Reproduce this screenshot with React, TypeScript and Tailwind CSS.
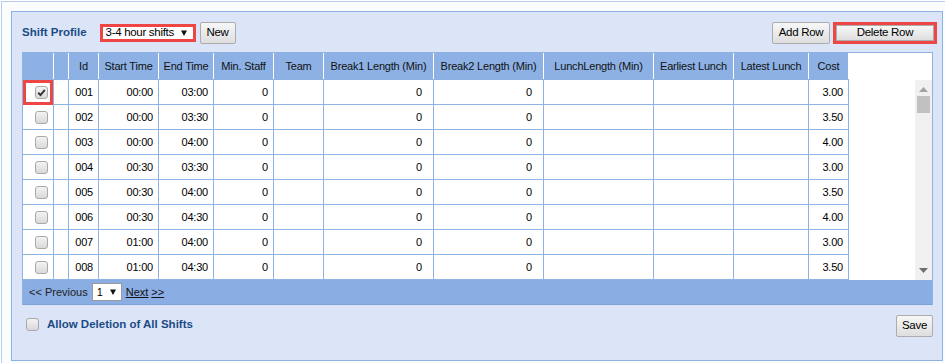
import React from 'react';

type Row = {
  id: string;
  start: string;
  end: string;
  cost: string;
};

const rows: Row[] = [
  { id: '001', start: '00:00', end: '03:00', cost: '3.00' },
  { id: '002', start: '00:00', end: '03:30', cost: '3.50' },
  { id: '003', start: '00:00', end: '04:00', cost: '4.00' },
  { id: '004', start: '00:30', end: '03:30', cost: '3.00' },
  { id: '005', start: '00:30', end: '04:00', cost: '3.50' },
  { id: '006', start: '00:30', end: '04:30', cost: '4.00' },
  { id: '007', start: '01:00', end: '04:00', cost: '3.00' },
  { id: '008', start: '01:00', end: '04:30', cost: '3.50' },
];

// column widths include the 1px right rule
const headers: { label: string; w: string }[] = [
  { label: '', w: 'w-[31px]' },
  { label: '', w: 'w-[15px]' },
  { label: 'Id', w: 'w-[30px]' },
  { label: 'Start Time', w: 'w-[60px]' },
  { label: 'End Time', w: 'w-[55px]' },
  { label: 'Min. Staff', w: 'w-[60px]' },
  { label: 'Team', w: 'w-[50px]' },
  { label: 'Break1 Length (Min)', w: 'w-[110px]' },
  { label: 'Break2 Length (Min)', w: 'w-[110px]' },
  { label: 'LunchLength (Min)', w: 'w-[110px]' },
  { label: 'Earliest Lunch', w: 'w-[80px]' },
  { label: 'Latest Lunch', w: 'w-[75px]' },
  { label: 'Cost', w: 'w-[40px]' },
];

function Check({ checked = false }: { checked?: boolean }) {
  return (
    <span className="flex h-[13px] w-[13px] items-center justify-center rounded-[3px] border border-[#a9a9a9] bg-linear-to-b from-[#f3f3f3] to-[#d9d9d9]">
      {checked && (
        <svg width="9" height="9" viewBox="0 0 9 9">
          <path d="M1.2 4.8 L3.5 7 L7.8 1.8" fill="none" stroke="#333" strokeWidth="1.9" />
        </svg>
      )}
    </span>
  );
}

function Arrow() {
  return (
    <svg width="6" height="6" viewBox="0 0 6 6">
      <path d="M0 0.5 H6 L3 6 Z" fill="#111" />
    </svg>
  );
}

function Btn({ children, className = '' }: { children: React.ReactNode; className?: string }) {
  return (
    <button
      className={`flex items-center justify-center rounded-[2px] border border-[#acacac] bg-linear-to-b from-[#f7f7f7] to-[#dedede] text-[11.5px] tracking-[-0.3px] text-black ${className}`}
    >
      {children}
    </button>
  );
}

const cell = 'flex h-[25px] shrink-0 items-center justify-end border-r border-b border-[#8db3e2] bg-white pr-[5px] text-[11px] tracking-[-0.2px] text-black';

export default function App() {
  return (
    <div className="h-[363px] w-[945px] bg-white pl-px pt-px font-['Liberation_Sans',Arial,sans-serif]">
      <div className="h-full border-l border-t border-[#b7ccee] bg-[#fbfcfe] pl-[9px] pt-[9px]">
        <div className="h-[350px] w-[932px] border border-[#8db3e2] bg-[#dbe5f7]">
          {/* toolbar */}
          <div className="mt-[10px] flex h-[22px] items-center pl-[10px] pr-[5px]">
            <span className="text-[11.5px] font-bold text-[#1b4b86]">Shift Profile</span>
            <div className="ml-[13px] flex h-[18px] w-[96px] items-center justify-between border-[3px] border-[#ee4545] bg-white pl-[3px] pr-[6px] text-[11.5px] tracking-[-0.3px] text-black">
              <span>3-4 hour shifts</span>
              <Arrow />
            </div>
            <Btn className="ml-[4px] h-[22px] w-[36px]">New</Btn>
            <div className="flex-1" />
            <Btn className="h-[22px] w-[58px]">Add Row</Btn>
            <div className="ml-[3px] border-[3px] border-[#ee4545]">
              <Btn className="h-[16px] w-[98px] rounded-none">Delete Row</Btn>
            </div>
          </div>

          {/* grid */}
          <div className="ml-[10px] mt-[8px] w-[911px] border-l border-r border-t border-[#8db3e2] bg-white">
            <div className="flex">
              <div className="flex flex-col">
                <div className="flex h-[27px] border-b border-[#8db3e2]">
                  {headers.map((h, i) => (
                    <div
                      key={i}
                      className={`${h.w} flex shrink-0 items-center justify-center border-r border-white bg-[#8db1e4] text-[11px] tracking-[-0.2px] text-[#111]`}
                    >
                      {h.label}
                    </div>
                  ))}
                </div>
                {rows.map((r, i) => (
                  <div key={r.id} className="flex">
                    <div className={`${cell} relative w-[31px] justify-center pr-0`}>
                      <Check checked={i === 0} />
                      {i === 0 && (
                        <span className="absolute inset-0 -bottom-px border-[3px] border-[#ee4545]" />
                      )}
                    </div>
                    <div className={`${cell} w-[15px]`} />
                    <div className={`${cell} w-[30px]`}>{r.id}</div>
                    <div className={`${cell} w-[60px]`}>{r.start}</div>
                    <div className={`${cell} w-[55px]`}>{r.end}</div>
                    <div className={`${cell} w-[60px]`}>0</div>
                    <div className={`${cell} w-[50px]`} />
                    <div className={`${cell} w-[110px] pr-[11px]`}>0</div>
                    <div className={`${cell} w-[110px] pr-[11px]`}>0</div>
                    <div className={`${cell} w-[110px]`} />
                    <div className={`${cell} w-[80px]`} />
                    <div className={`${cell} w-[75px]`} />
                    <div className={`${cell} w-[40px]`}>{r.cost}</div>
                  </div>
                ))}
              </div>

              {/* right blank + scrollbar */}
              <div className="flex flex-1 flex-col">
                <div className="h-[27px]" />
                <div className="flex flex-1">
                  <div className="flex-1" />
                  <div className="flex w-[17px] flex-col items-center bg-[#f0f0f0]">
                    <svg width="9" height="5" viewBox="0 0 9 5" className="mt-[7px]">
                      <path d="M0 5 L4.5 0 L9 5 Z" fill="#a3a3a3" />
                    </svg>
                    <div className="mt-[4px] h-[17px] w-[13px] bg-[#c1c1c1]" />
                    <div className="flex-1" />
                    <svg width="9" height="5" viewBox="0 0 9 5" className="mb-[7px]">
                      <path d="M0 0 L9 0 L4.5 5 Z" fill="#6f6f6f" />
                    </svg>
                  </div>
                </div>
              </div>
            </div>

            {/* pager */}
            <div className="flex h-[25px] items-center border-b border-[#7ea2d8] bg-[#8aade3] pl-[6px] text-[11px] text-[#222]">
              <span>&lt;&lt; Previous</span>
              <div className="ml-[4px] flex h-[18px] w-[30px] items-center justify-between border border-[#9a9a9a] bg-white pl-[4px] pr-[5px] text-black">
                <span>1</span>
                <Arrow />
              </div>
              <span className="ml-[4px] text-[#111] underline">Next</span>
              <span className="ml-[3px] text-[#111] underline">&gt;&gt;</span>
            </div>
          </div>

          {/* footer */}
          <div className="mt-[10px] flex items-start justify-between pl-[14px] pr-[9px]">
            <div className="flex items-center gap-[8px] pt-px">
              <Check />
              <span className="text-[11.5px] font-bold text-[#1b4b86]">Allow Deletion of All Shifts</span>
            </div>
            <Btn className="h-[22px] w-[37px]">Save</Btn>
          </div>
        </div>
      </div>
    </div>
  );
}
